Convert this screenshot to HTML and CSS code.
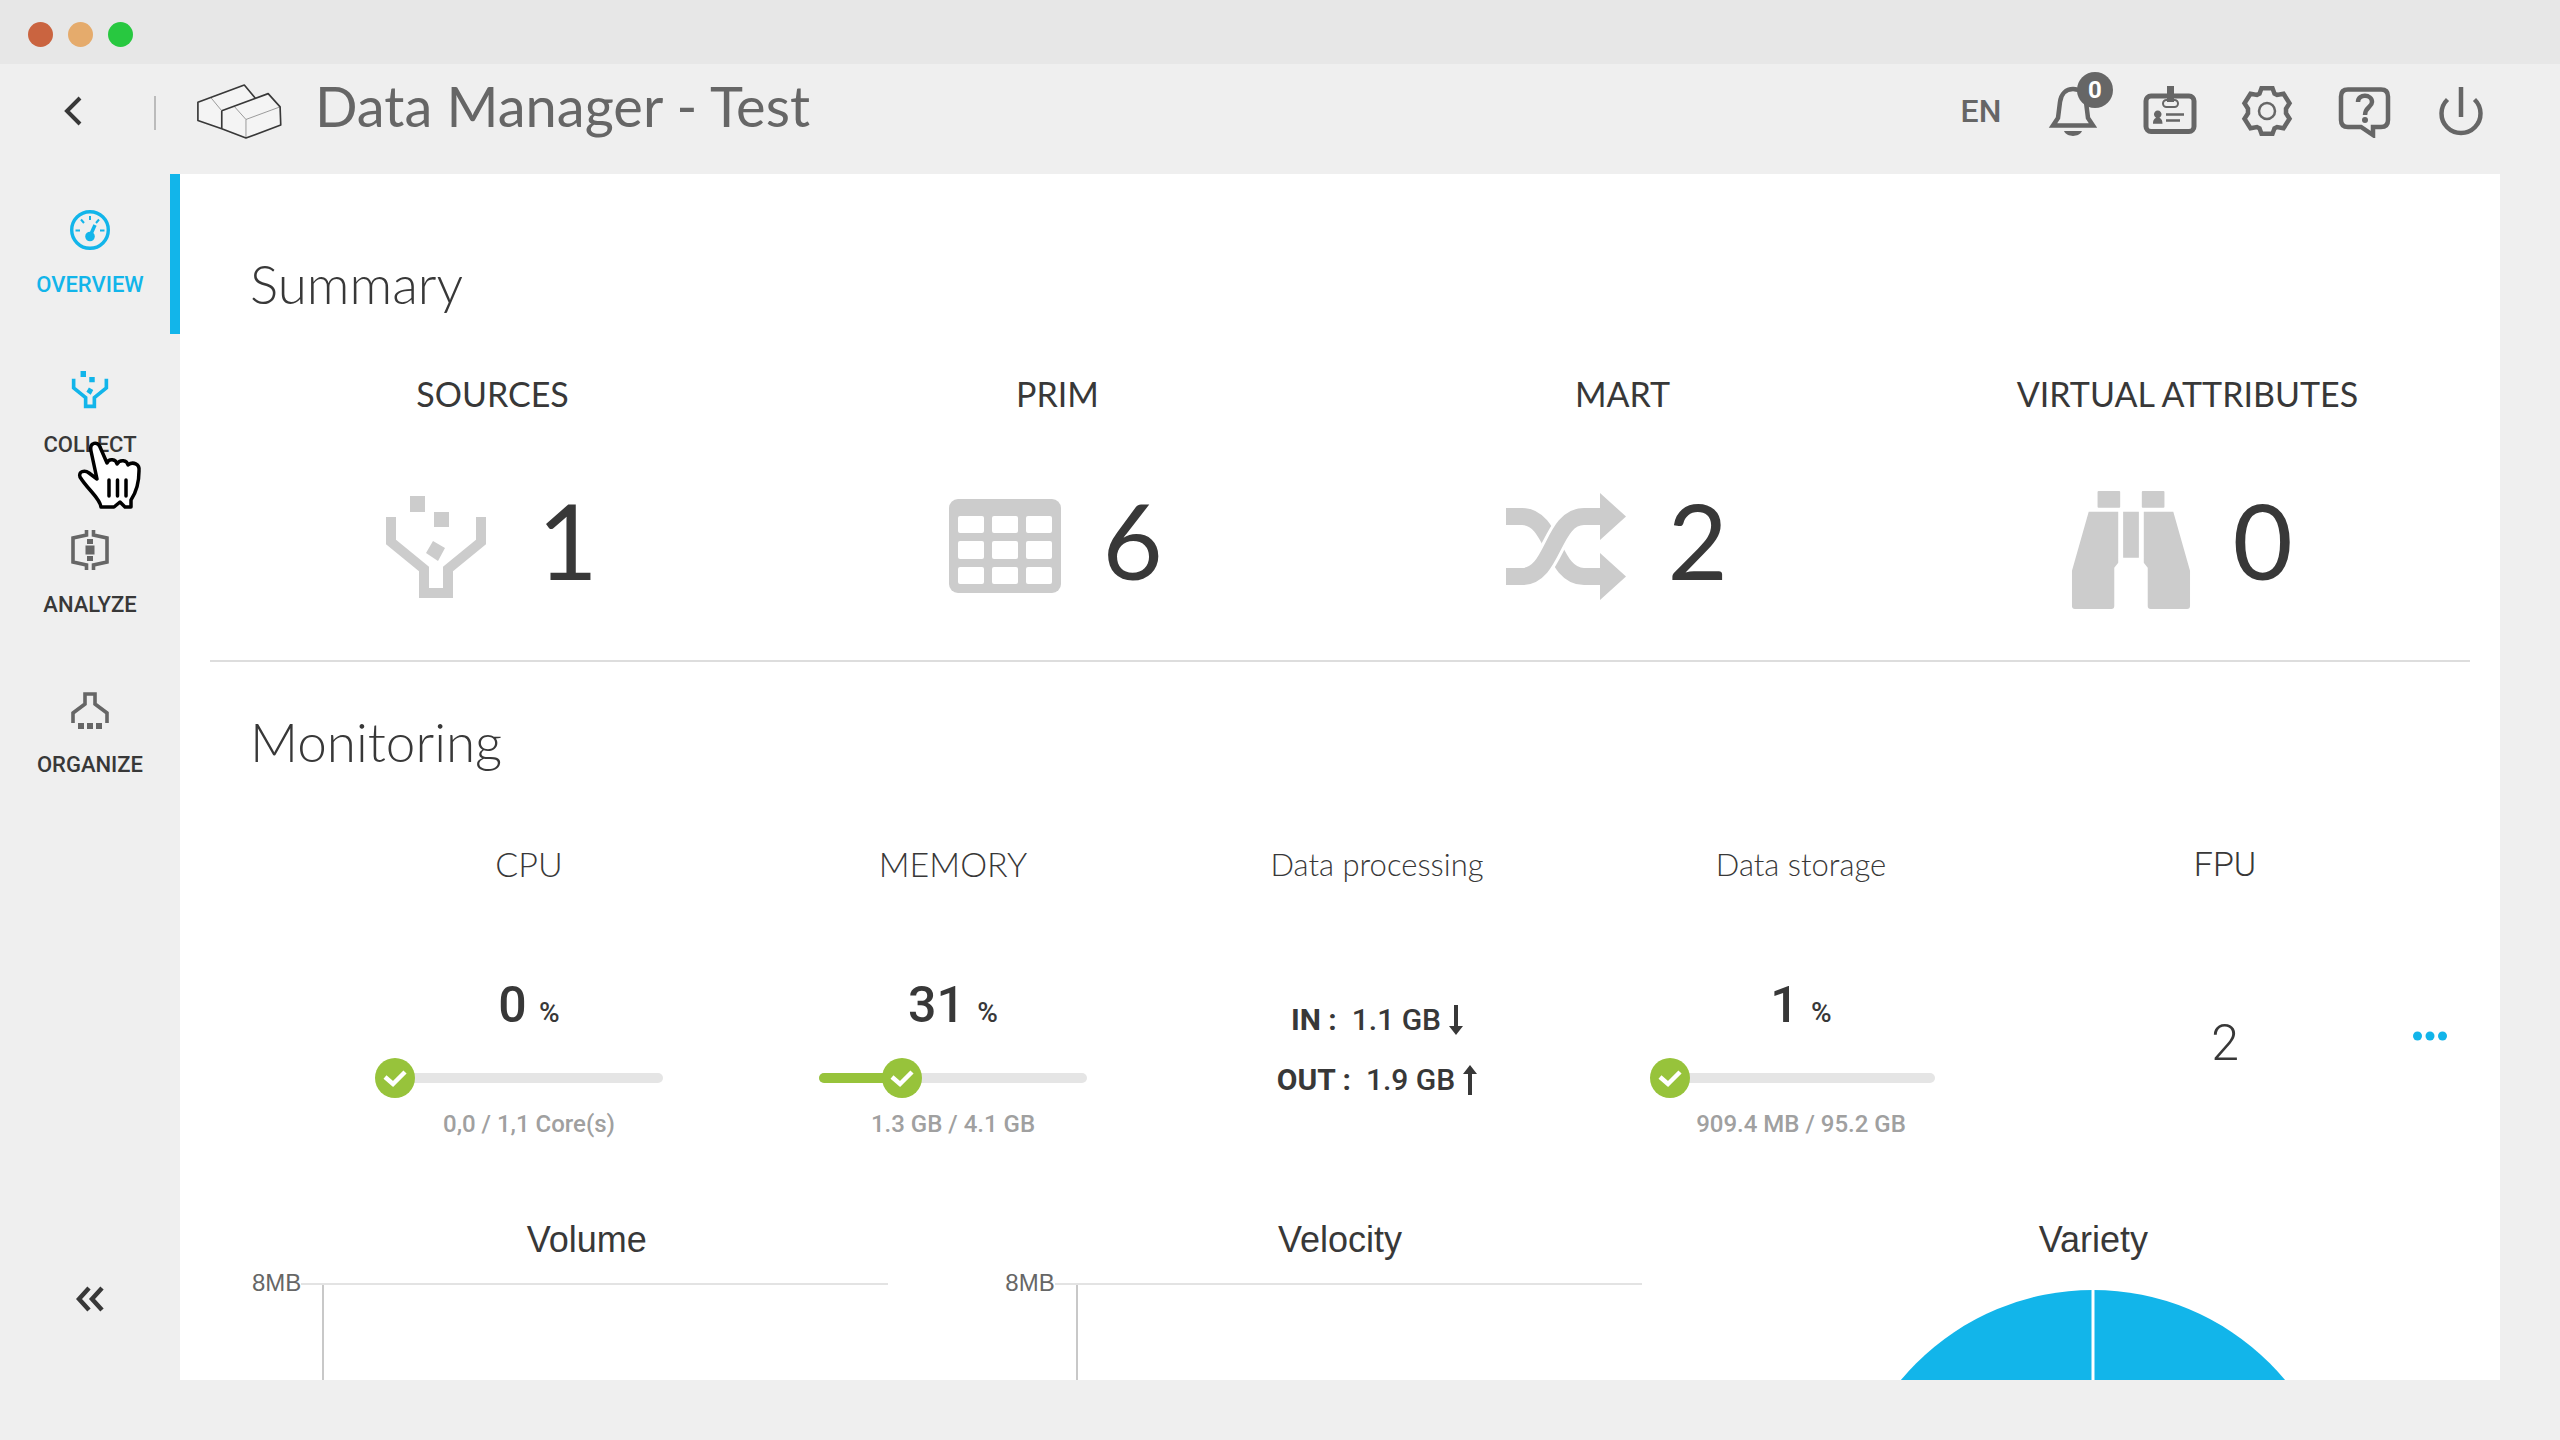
FILE: index.html
```html
<!DOCTYPE html>
<html lang="en">
<head>
<meta charset="utf-8">
<title>Data Manager - Test</title>
<link rel="stylesheet" href="styles.css">
</head>
<body>
<svg class="defs" aria-hidden="true">
  <symbol id="funnel" viewBox="0 0 120 120">
    <path d="M15 27V52L48 79V103H72V79L105 52V27" fill="none" stroke="currentColor" stroke-width="10"/>
    <path d="M34 6h15v16H34zM58 22h15v15H58zM57 51l12 7-7 13-12-8z" fill="currentColor"/>
  </symbol>
  <symbol id="check" viewBox="0 0 40 40">
    <circle cx="20" cy="20" r="20" fill="#97c33b"/>
    <path d="M10 19l8 7L30 14" fill="none" stroke="#fff" stroke-width="4.5"/>
  </symbol>
</svg>

<div class="titlebar">
  <span class="dot dot-close"></span>
  <span class="dot dot-min"></span>
  <span class="dot dot-max"></span>
</div>

<header class="header">
  <button class="icon-btn back" aria-label="Back">
    <svg width="22" height="32" viewBox="0 0 22 32"><path d="M18 3L5 16l13 13" fill="none" stroke="#383838" stroke-width="4"/></svg>
  </button>
  <span class="divider"></span>
  <svg class="logo" width="88" height="57" viewBox="45 40 264 172" fill="none" stroke-linejoin="round">
    <path d="M53 98L193 46l34 41-102 37v54L53 153zM125 124l140-52 36 40 2 55-105 39-73-28z" fill="#f4f4f4"/>
    <path d="M92 84l33 40M163 111l35 39v56M198 150l103-38" stroke="#888" stroke-width="2.5"/>
    <path d="M227 87L193 46 53 98v55l72 25v-54M125 124l140-52 36 40 2 55-105 39-73-28" stroke="#383838" stroke-width="5"/>
  </svg>
  <h1 class="title">Data Manager - Test</h1>
  <nav class="tools">
    <button class="icon-btn lang">EN</button>
    <button class="icon-btn" aria-label="Notifications">
      <svg width="54" height="54" viewBox="0 0 54 54"><path d="M7 41.500L12 34l2-16C15 10 20 5 27 5s12 5 13 13l2 16 5 7.500z" fill="none" stroke="currentColor" stroke-width="4.500"/><path d="M18 47h18c-3 6.500-15 6.500-18 0z" fill="currentColor"/></svg>
      <span class="badge">0</span>
    </button>
    <button class="icon-btn" aria-label="Profile">
      <svg width="54" height="54" viewBox="0 0 54 54"><rect x="3" y="12" width="48" height="35.500" rx="5" fill="none" stroke="currentColor" stroke-width="5"/><rect x="20" y="16" width="15" height="7" rx="3.500" fill="#efefef" stroke="currentColor" stroke-width="2"/><path d="M24 2h7v16h-7zM10 39.700c0-4 1.500-5 3-6a3.800 3.800 0 1 1 3.500 0c1.500 1 3 2 3 6z" fill="currentColor"/><path d="M23 30.500h18M23 36.500h14" stroke="currentColor" stroke-width="2.500"/></svg>
    </button>
    <button class="icon-btn" aria-label="Settings">
      <svg width="54" height="54" viewBox="0 0 54 54" fill="none" stroke="currentColor"><path d="M21.500 4.200h11l2 5.500 2.500 1.200 6.500-1.200 6 9.500-3.500 5.500v4.600l3.500 5.500-6 9.500-6.500-1.200-2.500 1.200-2 5.500h-11l-2-5.500-2.500-1.200-6.500 1.200-6-9.500 3.500-5.500v-4.600l-3.500-5.500 6-9.500 6.500 1.200 2.500-1.200z" stroke-width="4.500"/><circle cx="27" cy="27" r="8" stroke-width="2.500"/></svg>
    </button>
    <button class="icon-btn" aria-label="Help">
      <svg width="54" height="54" viewBox="0 0 54 54" fill="none" stroke="currentColor" stroke-width="4.500"><path d="M11 5.500h33q7 0 7 7V36q0 7-7 7h-8v8l-12-8H11q-7 0-7-7V12.500q0-7 7-7z"/><path d="M21 18c0-8.500 14-8 14 0 0 5-7 5-7 13"/><circle cx="28" cy="36" r="3" fill="currentColor" stroke="none"/></svg>
    </button>
    <button class="icon-btn" aria-label="Log out">
      <svg width="54" height="54" viewBox="0 0 54 54" fill="none" stroke="currentColor" stroke-width="4.500"><path d="M13.500 15.500a19.500 19.500 0 1 0 27 0M27 3v30"/></svg>
    </button>
  </nav>
</header>

<div class="body">
  <aside class="sidebar">
    <a class="nav-item active" href="#overview">
      <svg class="nav-icon" viewBox="0 0 40 40" fill="none" stroke="currentColor"><circle cx="20" cy="20" r="18.300" stroke-width="3.400"/><path d="M20 6v4M11 9.500l3 3.500M5.500 20.500h4.500M30 20.500h4.500M29 9.500L26 13" stroke-width="2"/><path d="M20.500 25L25 15" stroke-width="3.500"/><circle cx="20" cy="26.500" r="4.800" fill="currentColor" stroke="none"/></svg>
      OVERVIEW
    </a>
    <a class="nav-item hovered" href="#collect">
      <svg class="nav-icon" viewBox="5 3 110 110"><use href="#funnel" width="120" height="120"/></svg>
      COLLECT
      <svg class="cursor" width="68" height="72" viewBox="0 0 68 72"><path d="M25 67c-1-9-13-17-21-30-2-6 5-7 9-4l8 6L15 11c-2-9 7-10 9-4l7 16c2-5 9-4 10 1 3-5 10-4 11 1 5-4 12-1 11 6 0 12-2 20-8 29v7h-6l-5-5-6 5z" fill="#fff" stroke="#000" stroke-width="3.500" stroke-linejoin="round"/><path d="M33 40v16M41.500 40v16M50 40v16" stroke="#000" stroke-width="3.500" stroke-linecap="round"/></svg>
    </a>
    <a class="nav-item" href="#analyze">
      <svg class="nav-icon" viewBox="0 0 40 40"><path d="M16.500 0v5L3 8v24l13.500 3v5M23.500 0v5L37 8v24l-13.500 3v5" fill="none" stroke="currentColor" stroke-width="3.600"/><path d="M17 9h6v5h-6zM15.500 15.500h9v9h-9zM17 26h6v5h-6z" fill="currentColor"/></svg>
      ANALYZE
    </a>
    <a class="nav-item" href="#organize">
      <svg class="nav-icon" viewBox="0 0 40 40"><path d="M3 33V23l12-9V4h10v10l12 9v10" fill="none" stroke="currentColor" stroke-width="3.600"/><path d="M8 33h6v6H8zM17 33h6v6h-6zM26 33h6v6h-6z" fill="currentColor"/></svg>
      ORGANIZE
    </a>
    <button class="icon-btn collapse" aria-label="Collapse menu">
      <svg width="28" height="26" viewBox="0 0 28 26"><path d="M13 2L3 13l10 11M26 2L16 13l10 11" fill="none" stroke="#383838" stroke-width="4.500"/></svg>
    </button>
  </aside>

  <main class="content">
    <section class="summary">
      <h2>Summary</h2>
      <div class="summary-grid">
        <div class="stat">
          <h3>SOURCES</h3>
          <div class="stat-row"><svg class="stat-icon"><use href="#funnel"/></svg><span class="stat-num">1</span></div>
        </div>
        <div class="stat">
          <h3>PRIM</h3>
          <div class="stat-row">
            <svg class="stat-icon" viewBox="-4 0 120 120"><rect x="4" y="9" width="112" height="94" rx="9" fill="currentColor"/><g fill="#fff"><rect x="13" y="26" width="26" height="17" rx="2"/><rect x="47" y="26" width="26" height="17" rx="2"/><rect x="81" y="26" width="26" height="17" rx="2"/><rect x="13" y="51" width="26" height="18" rx="2"/><rect x="47" y="51" width="26" height="18" rx="2"/><rect x="81" y="51" width="26" height="18" rx="2"/><rect x="13" y="77" width="26" height="17" rx="2"/><rect x="47" y="77" width="26" height="17" rx="2"/><rect x="81" y="77" width="26" height="17" rx="2"/></g></svg>
            <span class="stat-num">6</span>
          </div>
        </div>
        <div class="stat">
          <h3>MART</h3>
          <div class="stat-row">
            <svg class="stat-icon" viewBox="0 0 120 120"><g fill="none" stroke="currentColor" stroke-width="17"><path d="M0 26.500h16C48 26.500 46 86.500 78 86.500h17"/><path d="M8 86.500h8C48 86.500 46 26.500 78 26.500h9" stroke="#fff" stroke-width="23"/><path d="M0 86.500h16C48 86.500 46 26.500 78 26.500h17"/></g><path d="M94 3l26 23.500L94 50zM94 63l26 23.500L94 110z" fill="currentColor"/></svg>
            <span class="stat-num">2</span>
          </div>
        </div>
        <div class="stat">
          <h3>VIRTUAL ATTRIBUTES</h3>
          <div class="stat-row">
            <svg class="stat-icon" viewBox="0 0 120 122" fill="currentColor"><rect x="26" y="1" width="23" height="17" rx="1"/><rect x="71" y="1" width="23" height="17" rx="1"/><path d="M52 22h16v47H52zM17 22h30v52l-4 5v39q0 3-3 3H3q-3 0-3-3V82zM103 22H73v52l4 5v39q0 3 3 3h37q3 0 3-3V82z"/></svg>
            <span class="stat-num">0</span>
          </div>
        </div>
      </div>
    </section>

    <section class="monitoring">
      <h2>Monitoring</h2>
      <div class="metrics">
        <div class="metric">
          <h3>CPU</h3>
          <p class="value">0 <small>%</small></p>
          <div class="track"><span class="fill" style="width:0%"></span><svg class="knob" style="left:0%"><use href="#check"/></svg></div>
          <p class="detail">0,0 / 1,1 Core(s)</p>
        </div>
        <div class="metric">
          <h3>MEMORY</h3>
          <p class="value">31 <small>%</small></p>
          <div class="track"><span class="fill" style="width:31%"></span><svg class="knob" style="left:31%"><use href="#check"/></svg></div>
          <p class="detail">1.3 GB / 4.1 GB</p>
        </div>
        <div class="metric data">
          <h3>Data processing</h3>
          <div class="flows">
            <p class="flow"><b>IN :</b><span>1.1 GB</span><svg width="14" height="30" viewBox="0 0 14 30"><path d="M5 0h4v21h5l-7 9-7-9h5z" fill="currentColor"/></svg></p>
            <p class="flow"><b>OUT :</b><span>1.9 GB</span><svg width="14" height="30" viewBox="0 0 14 30"><path d="M5 30h4V9h5L7 0 0 9h5z" fill="currentColor"/></svg></p>
          </div>
        </div>
        <div class="metric data">
          <h3>Data storage</h3>
          <p class="value">1 <small>%</small></p>
          <div class="track"><span class="fill" style="width:1%"></span><svg class="knob" style="left:1%"><use href="#check"/></svg></div>
          <p class="detail">909.4 MB / 95.2 GB</p>
        </div>
        <div class="metric fpu">
          <h3>FPU</h3>
          <p class="fpu-value">2</p>
        </div>
        <button class="icon-btn more" aria-label="More">
          <svg width="34" height="10" viewBox="0 0 34 10" fill="#12b5ea"><circle cx="4.500" cy="5" r="4.500"/><circle cx="17" cy="5" r="4.500"/><circle cx="29.500" cy="5" r="4.500"/></svg>
        </button>
      </div>
    </section>

    <section class="charts">
      <figure class="chart">
        <figcaption>Volume</figcaption>
        <div class="plot"><span class="tick">8MB</span><div class="area"></div></div>
      </figure>
      <figure class="chart">
        <figcaption>Velocity</figcaption>
        <div class="plot"><span class="tick">8MB</span><div class="area"></div></div>
      </figure>
      <figure class="chart">
        <figcaption>Variety</figcaption>
        <svg class="pie" width="500" height="500" viewBox="0 0 500 500"><circle cx="250" cy="250" r="250" fill="#12b5ea"/><path d="M250 0v250" stroke="#fff" stroke-width="3"/></svg>
      </figure>
    </section>
  </main>
</div>
</body>
</html>
```
FILE: styles.css
```css
* {
  box-sizing: border-box;
}

body {
  margin: 0;
  height: 100vh;
  display: flex;
  flex-direction: column;
  overflow: hidden;
  background: #efefef;
  color: #383838;
  font-family: Roboto, sans-serif;
}

h1, h2, h3, p, figure {
  margin: 0;
}

h1, h2, h3 {
  font-family: Lato, sans-serif;
}

svg {
  display: block;
  flex: none;
}

.defs {
  position: absolute;
  width: 0;
  height: 0;
}

.icon-btn {
  position: relative;
  padding: 0;
  border: 0;
  background: none;
  color: #666;
  font: inherit;
  cursor: pointer;
}

/* Window title bar */
.titlebar {
  flex: none;
  height: 64px;
  display: flex;
  align-items: center;
  gap: 15px;
  padding: 4px 28px 0;
  background: #e7e7e7;
}

.dot {
  width: 25px;
  height: 25px;
  border-radius: 50%;
}

.dot-close { background: #ca6440; }
.dot-min { background: #e5ab6c; }
.dot-max { background: #28c840; }

/* Application header */
.header {
  flex: none;
  height: 110px;
  display: flex;
  align-items: center;
  padding: 0 72px 16px 62px;
}

.divider {
  width: 2px;
  height: 34px;
  margin: 4px 39px 0 70px;
  background: #bbb;
}

.title {
  margin: 0 auto 10px 32px;
  font-size: 56px;
  line-height: 64px;
  font-weight: 400;
  color: #666;
}

.tools {
  display: flex;
  align-items: center;
  gap: 43px;
}

.icon-btn.lang {
  width: 44px;
  font-size: 32px;
  line-height: 38px;
  font-weight: 500;
}

.badge {
  position: absolute;
  top: -12px;
  left: 31px;
  width: 36px;
  height: 36px;
  border-radius: 50%;
  background: #666;
  color: #fff;
  font-size: 24px;
  line-height: 36px;
  font-weight: 700;
  text-align: center;
}

/* Sidebar */
.body {
  flex: 1;
  min-height: 0;
  display: flex;
}

.sidebar {
  flex: none;
  width: 180px;
  display: flex;
  flex-direction: column;
}

.nav-item {
  position: relative;
  height: 160px;
  display: flex;
  flex-direction: column;
  align-items: center;
  gap: 22px;
  padding-top: 36px;
  border-right: 10px solid transparent;
  padding-left: 10px;
  color: #383838;
  font-size: 22px;
  line-height: 26px;
  font-weight: 500;
  text-decoration: none;
}

.nav-item.active {
  color: #12b5ea;
  border-right-color: #12b5ea;
}

.nav-icon {
  width: 40px;
  height: 40px;
  color: #666;
}

.active .nav-icon,
.hovered .nav-icon {
  color: #12b5ea;
}

.cursor {
  position: absolute;
  top: 106px;
  left: 76px;
  z-index: 1;
}

.collapse {
  align-self: center;
  margin-top: auto;
  margin-bottom: 128px;
}

/* Content */
.content {
  flex: 1;
  min-width: 0;
  margin: 0 60px 60px 0;
  padding: 0 30px;
  overflow: hidden;
  background: #fff;
}

h2 {
  padding-left: 40px;
  font-size: 53px;
  line-height: 64px;
  font-weight: 300;
}

h3 {
  font-size: 34px;
  line-height: 44px;
  font-weight: 400;
  text-align: center;
}

.summary {
  padding: 78px 0 50px;
  border-bottom: 2px solid #ddd;
}

.summary-grid {
  display: grid;
  grid-template-columns: repeat(4, 1fr);
  margin-top: 56px;
}

.stat-row {
  display: flex;
  justify-content: center;
  gap: 42px;
  margin-top: 74px;
}

.stat-icon {
  width: 120px;
  height: 120px;
  color: #ccc;
}

.stat-num {
  width: 72px;
  font-family: Lato, sans-serif;
  font-size: 104px;
  line-height: 100px;
}

.monitoring {
  padding-top: 48px;
}

.metrics {
  display: grid;
  grid-template-columns: repeat(5, 1fr);
  margin-top: 68px;
  padding: 0 33px 0 107px;
}

.metric {
  grid-row: 1;
  display: flex;
  flex-direction: column;
  align-items: center;
}

.metric h3 {
  font-weight: 300;
}

.data h3 {
  font-size: 31px;
}

.value {
  margin-top: 89px;
  font-size: 50px;
  line-height: 60px;
  font-weight: 500;
}

.value small {
  font-size: 28px;
}

.track {
  position: relative;
  width: 268px;
  height: 10px;
  margin: 30px 0 26px;
  border-radius: 5px;
  background: #e5e5e5;
}

.fill {
  display: block;
  height: 10px;
  border-radius: 5px;
  background: #97c33b;
}

.knob {
  position: absolute;
  top: -15px;
  width: 40px;
  height: 40px;
  margin-left: -20px;
}

.detail {
  font-size: 24px;
  line-height: 30px;
  font-weight: 500;
  color: #a0a0a0;
}

.flows {
  margin-top: 104px;
}

.flow {
  display: flex;
  align-items: center;
  justify-content: center;
  font-size: 30px;
  line-height: 60px;
  font-weight: 500;
}

.flow b {
  margin-right: 15px;
}

.flow svg {
  margin-left: 8px;
}

.fpu {
  grid-column: 5;
}

.fpu h3 {
  font-family: Roboto, sans-serif;
}

.fpu-value {
  margin-top: 127px;
  font-size: 50px;
  line-height: 60px;
  font-weight: 300;
}

/* Shares the last column, at its right edge */
.more {
  grid-row: 1;
  grid-column: 5;
  justify-self: end;
  align-self: end;
  height: 10px;
  margin: 0 -10px 98px 0;
}

/* Charts */
.charts {
  display: grid;
  grid-template-columns: repeat(3, 1fr);
  margin-top: 79px;
}

.chart {
  display: flex;
  flex-direction: column;
  font-family: "Liberation Sans", sans-serif;
}

figcaption {
  font-size: 36px;
  line-height: 44px;
  text-align: center;
}

.plot {
  display: flex;
  margin-top: 6px;
  padding: 0 75px 0 42px;
}

.tick {
  font-size: 24px;
  line-height: 30px;
  color: #666;
}

/* Plot frame: top grid line starts at the tick, the axis sits inside it */
.area {
  flex: 1;
  height: 400px;
  margin-top: 15px;
  padding-left: 21px;
  border-top: 2px solid #e3e3e3;
}

.area::before {
  content: "";
  display: block;
  width: 2px;
  height: 100%;
  background: #c8c8c8;
}

.pie {
  align-self: center;
  margin-top: 28px;
}
```
